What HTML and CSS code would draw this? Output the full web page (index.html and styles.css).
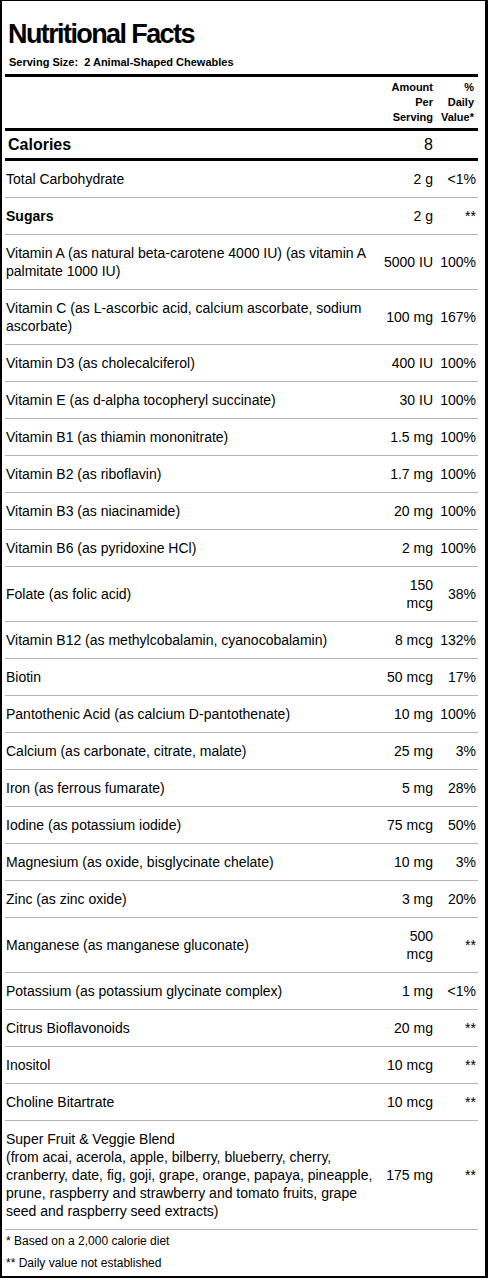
FILE: index.html
```html
<!DOCTYPE html>
<html>
<head>
<meta charset="utf-8">
<link rel="stylesheet" href="styles.css">
</head>
<body>
<div class="label">
  <h1 class="title">Nutritional Facts</h1>
  <div class="serving">Serving Size:&nbsp; 2 Animal-Shaped Chewables</div>
  <div class="row head">
    <span class="name"></span>
    <span class="amt">Amount<br>Per<br>Serving</span>
    <span class="pct">%<br>Daily<br>Value*</span>
  </div>
  <div class="row cal">
    <span class="name">Calories</span>
    <span class="amt">8</span>
    <span class="pct"></span>
  </div>
  <div class="rows">
    <div class="row item"><span class="name">Total Carbohydrate</span><span class="amt">2 g</span><span class="pct">&lt;1%</span></div>
    <div class="row item"><span class="name bold">Sugars</span><span class="amt">2 g</span><span class="pct">**</span></div>
    <div class="row item"><span class="name">Vitamin A (as natural beta-carotene 4000 IU) (as vitamin A palmitate 1000 IU)</span><span class="amt">5000 IU</span><span class="pct">100%</span></div>
    <div class="row item"><span class="name">Vitamin C (as L-ascorbic acid, calcium ascorbate, sodium ascorbate)</span><span class="amt">100 mg</span><span class="pct">167%</span></div>
    <div class="row item"><span class="name">Vitamin D3 (as cholecalciferol)</span><span class="amt">400 IU</span><span class="pct">100%</span></div>
    <div class="row item"><span class="name">Vitamin E (as d-alpha tocopheryl succinate)</span><span class="amt">30 IU</span><span class="pct">100%</span></div>
    <div class="row item"><span class="name">Vitamin B1 (as thiamin mononitrate)</span><span class="amt">1.5 mg</span><span class="pct">100%</span></div>
    <div class="row item"><span class="name">Vitamin B2 (as riboflavin)</span><span class="amt">1.7 mg</span><span class="pct">100%</span></div>
    <div class="row item"><span class="name">Vitamin B3 (as niacinamide)</span><span class="amt">20 mg</span><span class="pct">100%</span></div>
    <div class="row item"><span class="name">Vitamin B6 (as pyridoxine HCl)</span><span class="amt">2 mg</span><span class="pct">100%</span></div>
    <div class="row item"><span class="name">Folate (as folic acid)</span><span class="amt">150 mcg</span><span class="pct">38%</span></div>
    <div class="row item"><span class="name">Vitamin B12 (as methylcobalamin, cyanocobalamin)</span><span class="amt">8 mcg</span><span class="pct">132%</span></div>
    <div class="row item"><span class="name">Biotin</span><span class="amt">50 mcg</span><span class="pct">17%</span></div>
    <div class="row item"><span class="name">Pantothenic Acid (as calcium D-pantothenate)</span><span class="amt">10 mg</span><span class="pct">100%</span></div>
    <div class="row item"><span class="name">Calcium (as carbonate, citrate, malate)</span><span class="amt">25 mg</span><span class="pct">3%</span></div>
    <div class="row item"><span class="name">Iron (as ferrous fumarate)</span><span class="amt">5 mg</span><span class="pct">28%</span></div>
    <div class="row item"><span class="name">Iodine (as potassium iodide)</span><span class="amt">75 mcg</span><span class="pct">50%</span></div>
    <div class="row item"><span class="name">Magnesium (as oxide, bisglycinate chelate)</span><span class="amt">10 mg</span><span class="pct">3%</span></div>
    <div class="row item"><span class="name">Zinc (as zinc oxide)</span><span class="amt">3 mg</span><span class="pct">20%</span></div>
    <div class="row item"><span class="name">Manganese (as manganese gluconate)</span><span class="amt">500 mcg</span><span class="pct">**</span></div>
    <div class="row item"><span class="name">Potassium (as potassium glycinate complex)</span><span class="amt">1 mg</span><span class="pct">&lt;1%</span></div>
    <div class="row item"><span class="name">Citrus Bioflavonoids</span><span class="amt">20 mg</span><span class="pct">**</span></div>
    <div class="row item"><span class="name">Inositol</span><span class="amt">10 mcg</span><span class="pct">**</span></div>
    <div class="row item"><span class="name">Choline Bitartrate</span><span class="amt">10 mcg</span><span class="pct">**</span></div>
    <div class="row item"><span class="name">Super Fruit &amp; Veggie Blend<br>(from acai, acerola, apple, bilberry, blueberry, cherry, cranberry, date, fig, goji, grape, orange, papaya, pineapple, prune, raspberry and strawberry and tomato fruits, grape seed and raspberry seed extracts)</span><span class="amt">175 mg</span><span class="pct">**</span></div>
  </div>
  <div class="notes">
    <p>* Based on a 2,000 calorie diet</p>
    <p>** Daily value not established</p>
  </div>
</div>
</body>
</html>
```

FILE: styles.css
```css
html, body {
  margin: 0;
  padding: 0;
  background: #fff;
}
body {
  font-family: "Liberation Sans", Arial, Helvetica, sans-serif;
  color: #000;
}
.label {
  box-sizing: border-box;
  width: 488px;
  border-style: solid;
  border-color: #000;
  border-width: 1px 3px 2px 2px;
  padding: 0 7px 2px 3px;
}
.title {
  margin: 0;
  padding: 18px 0 0 3px;
  font-size: 27px;
  line-height: 30px;
  font-weight: bold;
  letter-spacing: -1.6px;
}
.serving {
  margin-top: 6px;
  padding: 0 0 5px 4px;
  font-size: 11px;
  line-height: 14px;
  font-weight: bold;
  border-bottom: 3px solid #000;
  white-space: pre;
}
.row {
  display: grid;
  grid-template-columns: 1fr 51px 43px;
  align-items: center;
  padding: 0 2px 0 1px;
}
.amt, .pct {
  text-align: right;
}
.head {
  font-size: 11px;
  line-height: 15px;
  font-weight: bold;
  padding-top: 3px;
  padding-bottom: 3px;
  border-bottom: 3px solid #000;
}
.head .pct {
  padding-right: 2px;
}
.cal {
  font-size: 16px;
  line-height: 27px;
  border-bottom: 3px solid #000;
}
.cal .name {
  font-weight: bold;
  padding-left: 2px;
}
.item {
  font-size: 14px;
  line-height: 18px;
  padding-top: 9px;
  padding-bottom: 9px;
  border-bottom: 1px solid #b4b4b4;
}
.bold {
  font-weight: bold;
}
.notes {
  padding: 0 0 0 1px;
  font-size: 12px;
  line-height: 14px;
}
.notes p {
  margin: 0;
  padding: 4px 0;
}
```
